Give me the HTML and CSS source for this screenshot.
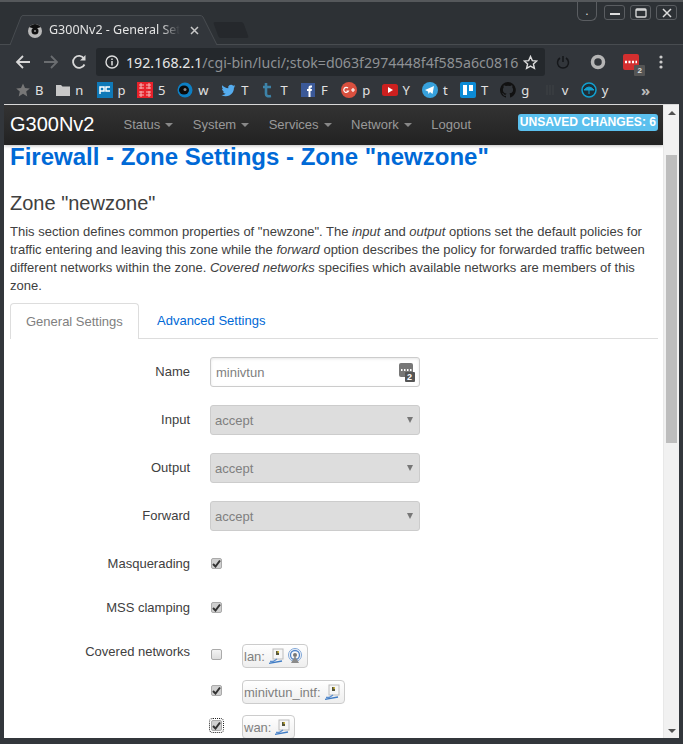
FILE: index.html

```html
<!DOCTYPE html>
<html>
<head>
  <meta charset="utf-8">
  <title>G300Nv2 - General Settings</title>
  <link rel="stylesheet" href="styles.css">
</head>
<body>
  <svg class="defs" width="0" height="0">
    <symbol id="iface" viewBox="0 0 16 16">
      <rect x="5" y="1" width="10" height="10" fill="#f6f6f6" stroke="#bcbcbc"/>
      <rect x="8" y="3" width="3" height="4" fill="#55553a"/>
      <rect x="9.500" y="3" width="1.500" height="2" fill="#c9b23a"/>
      <path d="M9 11 5 13.500H2" fill="none" stroke="#5c8fd0" stroke-width="1.300"/>
      <path d="M1 15.300 14 13" fill="none" stroke="#3f7cc4" stroke-width="1.300"/>
    </symbol>
  </svg>

  <div class="titlebar">
    <div class="tab">
      <svg class="tab-shape" width="230" height="31" viewBox="0 0 230 31">
        <path d="M4 31 15 3Q15.600 1.500 17 1.500H194Q196 1.500 197 3L211 31" fill="#32363b" stroke="#484c50"/>
      </svg>
      <svg class="favicon" width="16" height="16" viewBox="0 0 16 16">
        <circle cx="8" cy="9" r="7" fill="#b9b9b9"/>
        <path d="M2 5Q8-1 14 5L11 6H5Z" fill="#111"/>
        <circle cx="8" cy="9" r="3.500" fill="#111"/>
        <circle cx="8" cy="9" r="1" fill="#999"/>
      </svg>
      <span class="tab-title">G300Nv2 - General Set</span>
      <svg class="tab-close" width="9" height="9" viewBox="0 0 9 9"><path d="M1 1 8 8M8 1 1 8" stroke="#c8c8c8" stroke-width="1.500"/></svg>
    </div>
    <div class="newtab"></div>
    <div class="winbtns">
      <div class="winbtn winbtn-menu">.</div>
      <div class="winbtn"><svg width="12" height="12" viewBox="0 0 12 12"><path d="M1 7H11" stroke="#ddd" stroke-width="2"/></svg></div>
      <div class="winbtn"><svg width="12" height="12" viewBox="0 0 12 12"><rect x="1" y="2" width="10" height="8" rx="1" fill="none" stroke="#ddd" stroke-width="1.300"/><path d="M1 3H11" stroke="#ddd" stroke-width="1.500"/></svg></div>
      <div class="winbtn"><svg width="12" height="12" viewBox="0 0 12 12"><path d="M2 2 10 10M10 2 2 10" stroke="#ddd" stroke-width="1.500"/></svg></div>
    </div>
  </div>

  <div class="toolbar">
    <svg class="navicon" width="16" height="16" viewBox="0 0 16 16"><path d="M15 8H2M8 2 2 8 8 14" fill="none" stroke="#d8d8d8" stroke-width="1.800"/></svg>
    <svg class="navicon" width="16" height="16" viewBox="0 0 16 16"><path d="M1 8H14M8 2 14 8 8 14" fill="none" stroke="#6a6d70" stroke-width="1.800"/></svg>
    <svg class="navicon" width="16" height="16" viewBox="0 0 16 16"><path d="M13.500 10.500A6 6 0 1 1 13 4.500" fill="none" stroke="#d8d8d8" stroke-width="1.800"/><path d="M14.500 1V6.500H9Z" fill="#d8d8d8"/></svg>
    <div class="omnibox">
      <svg class="info" width="14" height="14" viewBox="0 0 14 14"><circle cx="7" cy="7" r="6" fill="none" stroke="#ddd" stroke-width="1.400"/><path d="M7 6V10.500M7 3.500V5" stroke="#ddd" stroke-width="1.500"/></svg>
      <span class="url"><span class="url-host">192.168.2.1</span>/cgi-bin/luci/;stok=d063f2974448f4f585a6c0816</span>
      <svg class="urlstar" width="15" height="15" viewBox="0 0 15 15"><path d="M7.500 1.500 9.300 5.600 13.800 6 10.400 9 11.400 13.400 7.500 11.100 3.600 13.400 4.600 9 1.200 6 5.700 5.600Z" fill="none" stroke="#ddd" stroke-width="1.400"/></svg>
    </div>
    <div class="exts">
      <svg width="14" height="14" viewBox="0 0 14 14"><path d="M4 3A5.500 5.500 0 1 0 10 3M7 1V7" fill="none" stroke="#15171a" stroke-width="1.500"/></svg>
      <svg width="16" height="16" viewBox="0 0 16 16"><circle cx="8" cy="8" r="5.500" fill="none" stroke="#b5b5b5" stroke-width="3.500"/></svg>
      <div class="ext-ublock">
        <svg width="16" height="16" viewBox="0 0 16 16"><rect width="16" height="16" rx="2" fill="#d32f2f"/><path d="M2 8H4M5.500 8H7.500M9 8H11M12.500 8H14" stroke="#fff" stroke-width="2.400"/></svg>
        <span class="ext-badge">2</span>
      </div>
      <svg width="4" height="14" viewBox="0 0 4 14"><circle cx="2" cy="2" r="1.600" fill="#ccc"/><circle cx="2" cy="7" r="1.600" fill="#ccc"/><circle cx="2" cy="12" r="1.600" fill="#ccc"/></svg>
    </div>
  </div>

  <div class="bookmarks">
    <div class="bm"><svg width="14" height="14" viewBox="0 0 14 14"><path d="M7 .5 9 5 13.800 5.400 10.200 8.600 11.300 13.400 7 10.800 2.700 13.400 3.800 8.600 .2 5.400 5 5Z" fill="#777"/></svg><span class="bm-text">B</span></div>
    <div class="bm"><svg width="14" height="14" viewBox="0 0 14 14"><path d="M0 2H5L6.500 3.500H14V13H0Z" fill="#c8c8c8"/></svg><span class="bm-text">n</span></div>
    <div class="bm"><svg width="16" height="16" viewBox="0 0 16 16"><rect width="16" height="16" fill="#0f79b8"/><path d="M3 12V5H7V9H3M13 5H9V9H13" fill="none" stroke="#fff" stroke-width="1.500"/></svg><span class="bm-text">p</span></div>
    <div class="bm"><svg width="16" height="16" viewBox="0 0 16 16"><rect width="16" height="16" fill="#e8212a"/><path d="M2 3H7M9 3H14M2 6H7M9 6H14M2 10H7M9 10H14M2 13H7M9 13H14M4 1V7M12 1V7M4 9V15M12 9V15" stroke="#f7b7b7"/></svg><span class="bm-text">5</span></div>
    <div class="bm bm-wide"><svg width="16" height="16" viewBox="0 0 16 16"><circle cx="8" cy="8" r="7.500" fill="#0d7fc4"/><ellipse cx="7" cy="8" rx="5" ry="4.500" fill="#0b0b0b"/><circle cx="8" cy="7.500" r="1.500" fill="#888"/></svg><span class="bm-text">w</span></div>
    <div class="bm"><svg width="15" height="15" viewBox="0 0 24 24"><path d="M23 5c-.8.400-1.700.6-2.600.7 1-.6 1.700-1.500 2-2.500-.9.500-1.900.9-2.900 1.100a4.600 4.600 0 0 0-7.900 4.200C7.800 8.300 4.400 6.500 2.200 3.700c-1.200 2.100-.6 4.800 1.400 6.100-.7 0-1.400-.2-2-.6 0 2.200 1.600 4.100 3.700 4.500-.7.200-1.400.2-2.100.1.600 1.800 2.300 3.100 4.300 3.200A9.300 9.300 0 0 1 .7 19c2.100 1.300 4.500 2 7 2 8.500 0 13.300-7.200 13-13.600.9-.6 1.700-1.400 2.300-2.400Z" fill="#55acee"/></svg><span class="bm-text">T</span></div>
    <div class="bm bm-tumblr"><svg width="12" height="16" viewBox="0 0 12 16"><path d="M5 1V5H2M5 5H10M5 5V12Q5 15 10 14" fill="none" stroke="#3d83a8" stroke-width="2.600"/></svg><span class="bm-text">T</span></div>
    <div class="bm bm-fb"><svg width="14" height="14" viewBox="0 0 14 14"><rect width="14" height="14" fill="#3b5998"/><path d="M7.500 14V8H6V6H7.500V4.500Q7.500 2.500 9.500 2.500H11V4.500H10Q9.500 4.500 9.500 5V6H11L10.700 8H9.500V14Z" fill="#fff"/></svg><span class="bm-text">F</span></div>
    <div class="bm"><svg width="16" height="16" viewBox="0 0 16 16"><circle cx="8" cy="8" r="8" fill="#d9503f"/><path d="M7 6A2.500 2.500 0 1 0 7.500 9H5.500" fill="none" stroke="#fff" stroke-width="1.200"/><path d="M10 8H14M12 6V10" stroke="#fff" stroke-width="1.200"/></svg><span class="bm-text">p</span></div>
    <div class="bm"><svg width="16" height="12" viewBox="0 0 16 12"><rect width="16" height="12" rx="2.500" fill="#cd201f"/><path d="M6 3 11 6 6 9Z" fill="#fff"/></svg><span class="bm-text">Y</span></div>
    <div class="bm bm-tele"><svg width="16" height="16" viewBox="0 0 16 16"><circle cx="8" cy="8" r="8" fill="#37a1dc"/><path d="M3 8 12 4 10.500 12 8 10 6.500 12 6 9.500Z" fill="#fff"/></svg><span class="bm-text">t</span></div>
    <div class="bm"><svg width="16" height="16" viewBox="0 0 16 16"><rect width="16" height="16" rx="2" fill="#0c8bd6"/><rect x="3" y="3" width="4" height="10" fill="#fff"/><rect x="9" y="3" width="4" height="6" fill="#fff"/></svg><span class="bm-text">T</span></div>
    <div class="bm bm-gh"><svg width="16" height="16" viewBox="0 0 16 16"><path d="M8 0a8 8 0 0 0-2.500 15.600c.4.100.5-.2.500-.4v-1.400c-2.200.5-2.700-1-2.700-1-.4-.9-.9-1.200-.9-1.200-.7-.5.100-.5.100-.5.800.1 1.200.8 1.200.8.700 1.200 1.900.9 2.300.7.100-.5.300-.9.500-1.100-1.800-.2-3.600-.9-3.600-4 0-.9.300-1.600.8-2.100-.1-.2-.4-1 .1-2.100 0 0 .7-.2 2.200.8a7.600 7.600 0 0 1 4 0c1.500-1 2.200-.8 2.200-.8.400 1.100.2 1.900.1 2.100.5.600.8 1.300.8 2.100 0 3.100-1.900 3.700-3.700 3.900.3.300.6.800.6 1.500v2.200c0 .2.100.5.600.4A8 8 0 0 0 8 0Z" fill="#111"/></svg><span class="bm-text">g</span></div>
    <div class="bm bm-bars"><svg width="10" height="16" viewBox="0 0 10 16"><path d="M2 3V13M5 3V13M8 3V13" stroke="#3f4246"/></svg><span class="bm-text">v</span></div>
    <div class="bm"><svg width="16" height="16" viewBox="0 0 16 16"><circle cx="8" cy="8" r="7" fill="#1f2d35" stroke="#12a0d0" stroke-width="1.500"/><path d="M3 8Q8 2 13 8ZM8 8V12" fill="#12a0d0" stroke="#12a0d0"/></svg><span class="bm-text">y</span></div>
    <div class="bm-more">»</div>
  </div>

  <div class="viewport">
    <div class="page">
      <div class="navbar">
        <span class="brand">G300Nv2</span>
        <div class="nav">
          <span class="nav-item">Status<i class="caret"></i></span>
          <span class="nav-item">System<i class="caret"></i></span>
          <span class="nav-item">Services<i class="caret"></i></span>
          <span class="nav-item">Network<i class="caret"></i></span>
          <span class="nav-item">Logout</span>
        </div>
        <span class="unsaved">UNSAVED CHANGES: 6</span>
      </div>

      <div class="content">
        <h2 class="page-title">Firewall - Zone Settings - Zone "newzone"</h2>
        <h3 class="section-title">Zone "newzone"</h3>
        <p class="section-descr">This section defines common properties of "newzone". The <em>input</em> and <em>output</em> options set the default policies for traffic entering and leaving this zone while the <em>forward</em> option describes the policy for forwarded traffic between different networks within the zone. <em>Covered networks</em> specifies which available networks are members of this zone.</p>

        <ul class="tabs">
          <li class="tabs-active">General Settings</li>
          <li>Advanced Settings</li>
        </ul>

        <div class="form">
          <div class="row">
            <label class="row-label">Name</label>
            <div class="textbox">
              <input class="textinput" type="text" value="minivtun">
              <svg class="lastpass" width="16" height="20" viewBox="0 0 16 20">
                <rect x="0" y="1" width="14" height="14" rx="2" fill="#777"/>
                <path d="M2 8H3.500M5 8H6.500M8 8H9.500M11 8H12.500" stroke="#fff" stroke-width="1.800"/>
                <rect x="6" y="10" width="10" height="10" rx="1" fill="#555"/>
              </svg>
              <span class="lastpass-num">2</span>
            </div>
          </div>
          <div class="row">
            <label class="row-label">Input</label>
            <div class="selectbox">accept<i class="select-arrow"></i></div>
          </div>
          <div class="row">
            <label class="row-label">Output</label>
            <div class="selectbox">accept<i class="select-arrow"></i></div>
          </div>
          <div class="row">
            <label class="row-label">Forward</label>
            <div class="selectbox">accept<i class="select-arrow"></i></div>
          </div>
          <div class="row row-check">
            <label class="row-label">Masquerading</label>
            <span class="check is-on"><svg width="9" height="9" viewBox="0 0 9 9"><path d="M1 5 3.500 7.500 8 1.500" fill="none" stroke="#333" stroke-width="2"/></svg></span>
          </div>
          <div class="row row-check">
            <label class="row-label">MSS clamping</label>
            <span class="check is-on"><svg width="9" height="9" viewBox="0 0 9 9"><path d="M1 5 3.500 7.500 8 1.500" fill="none" stroke="#333" stroke-width="2"/></svg></span>
          </div>
          <div class="row row-nets">
            <label class="row-label">Covered networks</label>
            <div class="nets">
              <div class="net">
                <span class="check"></span>
                <span class="chip">lan:
                  <svg width="16" height="16"><use href="#iface"/></svg>
                  <svg width="16" height="16" viewBox="0 0 16 16"><circle cx="8" cy="7" r="6.500" fill="none" stroke="#7fa6d8"/><circle cx="8" cy="7" r="4.500" fill="none" stroke="#4f83c8" stroke-width="1.300"/><circle cx="8" cy="7" r="2" fill="#777"/><path d="M4 15H12L8 8Z" fill="#8a8a8a"/></svg>
                </span>
              </div>
              <div class="net">
                <span class="check is-on"><svg width="9" height="9" viewBox="0 0 9 9"><path d="M1 5 3.500 7.500 8 1.500" fill="none" stroke="#333" stroke-width="2"/></svg></span>
                <span class="chip">minivtun_intf:
                  <svg width="16" height="16"><use href="#iface"/></svg>
                </span>
              </div>
              <div class="net">
                <span class="check is-on is-focus"><svg width="9" height="9" viewBox="0 0 9 9"><path d="M1 5 3.500 7.500 8 1.500" fill="none" stroke="#333" stroke-width="2"/></svg></span>
                <span class="chip">wan:
                  <svg width="16" height="16"><use href="#iface"/></svg>
                </span>
              </div>
            </div>
          </div>
        </div>
      </div>
    </div>

    <div class="scrollbar">
      <i class="sb-up"></i>
      <div class="sb-track"><div class="sb-thumb"></div></div>
      <i class="sb-down"></i>
    </div>
  </div>
</body>
</html>
```

FILE: styles.css

```css
* {
  box-sizing: border-box;
}

html, body {
  height: 100%;
}

body {
  margin: 0;
  height: 744px;
  overflow: hidden;
  display: flex;
  flex-direction: column;
  background: #32363b;
  border-top: 2px solid #55585b;
  font-family: "Liberation Sans", sans-serif;
}

.defs {
  position: absolute;
}

/* browser frame */
.titlebar {
  height: 43px;
  flex: none;
  display: flex;
  background: #2d3135;
  border-bottom: 1px solid #484c50;
  padding-left: 6px;
}

.tab {
  position: relative;
  width: 207px;
  height: 42px;
  padding: 20px 0 0 21px;
  display: flex;
  align-items: flex-start;
  color: #e4e4e4;
  font: 12.500px "Noto Sans", sans-serif;
}

.tab-shape {
  position: absolute;
  left: 0;
  top: 12px;
}

.favicon,
.tab-title,
.tab-close {
  position: relative;
}

.tab-title {
  margin-left: 6px;
  line-height: 16px;
  width: 131px;
  white-space: nowrap;
  overflow: hidden;
  -webkit-mask-image: linear-gradient(to right, #000 85%, transparent);
  mask-image: linear-gradient(to right, #000 85%, transparent);
}

.tab-close {
  margin: 4px 0 0 10px;
}

.newtab {
  width: 30px;
  height: 16px;
  margin: 20px 0 0 3px;
  background: #25282c;
  transform: skewX(20deg);
  border-radius: 2px;
}

.winbtns {
  margin-left: auto;
  padding-right: 6px;
  display: flex;
  align-items: flex-start;
  gap: 5px;
}

.winbtn {
  width: 21px;
  height: 15px;
  margin-top: 3px;
  border: 1px solid #5a5d61;
  border-radius: 3px;
  display: flex;
  align-items: center;
  justify-content: center;
}

.winbtn-menu {
  width: 20px;
  height: 19px;
  margin: 0 2px 0 0;
  border-top: 0;
  border-radius: 0 0 6px 6px;
  color: #ddd;
  font-size: 12px;
}

.toolbar {
  height: 32px;
  flex: none;
  display: flex;
  align-items: center;
  padding: 2px 0 0 15px;
  background: #32363b;
}

.navicon {
  margin-right: 12px;
}

.omnibox {
  width: 449px;
  height: 28px;
  margin-left: -3px;
  padding: 0 7px 0 9px;
  display: flex;
  align-items: center;
  background: #24282c;
  border-radius: 3px;
  font: 14.200px "Noto Sans", sans-serif;
  color: #8e9194;
}

.info {
  flex: none;
}

.url {
  margin-left: 7px;
  white-space: nowrap;
  overflow: hidden;
  flex: 1;
}

.url-host {
  color: #e6e6e6;
}

.urlstar {
  flex: none;
}

.exts {
  flex: 1;
  display: flex;
  align-items: center;
  padding: 0 20px 0 11px;
  justify-content: space-between;
}

.ext-ublock {
  position: relative;
  height: 16px;
  margin-left: -2px;
}

.ext-badge {
  position: absolute;
  left: 11px;
  top: 11px;
  width: 11px;
  height: 11px;
  background: #555;
  color: #ddd;
  font: bold 8px/11px "Liberation Sans", sans-serif;
  text-align: center;
  border-radius: 1px;
}

.bookmarks {
  height: 27px;
  flex: none;
  display: flex;
  align-items: center;
  padding: 0 0 1px 16px;
  background: #32363b;
  color: #e2e2e2;
  font: 13px "Noto Sans", sans-serif;
}

.bm {
  width: 40.300px;
  display: flex;
  align-items: center;
  gap: 5px;
  flex: none;
}

.bm-wide {
  width: 44px;
}

.bm-tumblr {
  width: 39.500px;
  gap: 7px;
}

.bm-fb {
  gap: 6px;
}

.bm-tele {
  width: 38px;
}

.bm-gh {
  width: 44.500px;
}

.bm-bars {
  width: 36px;
  gap: 7px;
}

.bm-more {
  margin-left: 20px;
  color: #bbb;
  font-size: 15px;
  font-weight: bold;
}

/* page area */
.viewport {
  flex: 1;
  min-height: 0;
  margin: 0 4px 6px;
  display: flex;
  background: #fff;
  border-top: 1px solid #d8d8d8;
}

.page {
  flex: 1;
  min-width: 0;
  overflow: hidden;
  background: #fff;
  font-size: 13px;
  color: #404040;
}

.navbar {
  height: 40px;
  display: flex;
  align-items: flex-start;
  padding: 0 5px 0 6px;
  background: linear-gradient(#333, #222);
  box-shadow: 0 1px 3px rgba(0, 0, 0, 0.25);
  color: #fff;
}

.brand {
  font-size: 20px;
  line-height: 38px;
  margin-right: 29px;
  color: #fff;
}

.nav {
  display: flex;
  gap: 19.500px;
  color: #999;
  line-height: 39px;
}

.nav-item {
  display: flex;
  align-items: center;
}

.caret {
  margin-left: 5px;
  margin-top: 1px;
  border: 4px solid transparent;
  border-top-color: #888;
  border-bottom: 0;
}

.unsaved {
  margin: 9px 0 0 auto;
  height: 17px;
  padding: 0 2px;
  background: #5bc0ee;
  border-radius: 3px;
  color: #fff;
  font-size: 12.100px;
  font-weight: bold;
  line-height: 16px;
  white-space: nowrap;
}

.content {
  padding: 0 5px 0 6px;
}

.page-title {
  margin: -2px 0 0;
  color: #0069d6;
  font-size: 24px;
  line-height: 27px;
  font-weight: bold;
}

.section-title {
  margin: 21px 0 0;
  color: #404040;
  font-size: 20px;
  font-weight: normal;
  line-height: 24px;
}

.section-descr {
  margin: 8px 0 0;
  line-height: 18px;
}

.tabs {
  margin: 8px 0 0;
  padding: 0;
  list-style: none;
  display: flex;
  height: 36px;
  border-bottom: 1px solid #ddd;
  color: #0069d6;
}

.tabs li {
  padding: 0 16px 0 18px;
  line-height: 36px;
}

.tabs .tabs-active {
  height: 36px;
  width: 129px;
  padding: 0 15px;
  white-space: nowrap;
  color: #808080;
  background: #fff;
  border: 1px solid #ddd;
  border-bottom: 0;
  border-radius: 4px 4px 0 0;
}

.form {
  margin-top: 18px;
}

.row {
  display: flex;
  align-items: flex-start;
  height: 48px;
}

.row-check {
  height: 44px;
}

.row-label {
  width: 180px;
  flex: none;
  text-align: right;
  line-height: 29px;
  color: #404040;
}

.textbox {
  position: relative;
  margin-left: 20px;
  width: 210px;
  height: 30px;
}

.textinput {
  width: 100%;
  height: 100%;
  padding: 0 5px;
  border: 1px solid #ccc;
  border-radius: 3px;
  box-shadow: inset 0 1px 3px rgba(0, 0, 0, 0.1);
  font: 13px "Liberation Sans", sans-serif;
  color: #808080;
}

.lastpass {
  position: absolute;
  right: 5px;
  top: 5px;
}

.lastpass-num {
  position: absolute;
  right: 6px;
  top: 15px;
  width: 9px;
  color: #fff;
  font-size: 9px;
  font-weight: bold;
  line-height: 10px;
  text-align: center;
}

.selectbox {
  position: relative;
  margin-left: 20px;
  width: 210px;
  height: 30px;
  padding: 0 4px;
  background: #ddd;
  border: 1px solid #ccc;
  border-radius: 3px;
  color: #808080;
  line-height: 29px;
}

.select-arrow {
  position: absolute;
  right: 6px;
  top: 11px;
  border: 3.500px solid transparent;
  border-top: 6px solid #777;
  border-bottom: 0;
}

.check {
  width: 11px;
  height: 11px;
  flex: none;
  margin: 9px 0 0 21px;
  border: 1px solid #aaa;
  border-radius: 2px;
  background: linear-gradient(#f4f4f4, #ddd);
  display: flex;
  align-items: center;
  justify-content: center;
}

.check.is-on {
  background: #d0d0d0;
}

.check.is-focus {
  outline: 1px dotted #222;
  outline-offset: 1px;
}

.nets {
  flex: 1;
  display: flex;
  flex-direction: column;
  margin-top: 5px;
}

.net {
  display: flex;
  align-items: flex-start;
  height: 36px;
}

.net .check {
  margin-top: 7px;
}

.net:last-child .check {
  margin-top: 6px;
}

.chip {
  display: inline-flex;
  align-items: center;
  gap: 3px;
  height: 24px;
  margin: 2px 0 0 20px;
  padding: 0 4px 0 1px;
  border: 1px solid #ccc;
  border-radius: 4px;
  background: linear-gradient(#fff, #eee);
  color: #808080;
  white-space: nowrap;
}

.net:last-child .chip {
  margin-top: 1px;
}

/* scrollbar */
.scrollbar {
  width: 16px;
  flex: none;
  display: flex;
  flex-direction: column;
  align-items: center;
  background: #f1f1f1;
  border-left: 1px solid #e8e8e8;
}

.sb-up,
.sb-down {
  flex: none;
  width: 0;
  border: 4px solid transparent;
  border-bottom: 4px solid #505050;
  border-top: 0;
  margin: 6px 0 4px;
}

.sb-down {
  border-top: 4px solid #505050;
  border-bottom: 0;
  margin: 0 0 5px;
}

.sb-track {
  flex: 1;
  width: 100%;
  padding: 36px 2px 0;
  overflow: hidden;
}

.sb-thumb {
  height: 288px;
  background: #bdbdbd;
}
```
